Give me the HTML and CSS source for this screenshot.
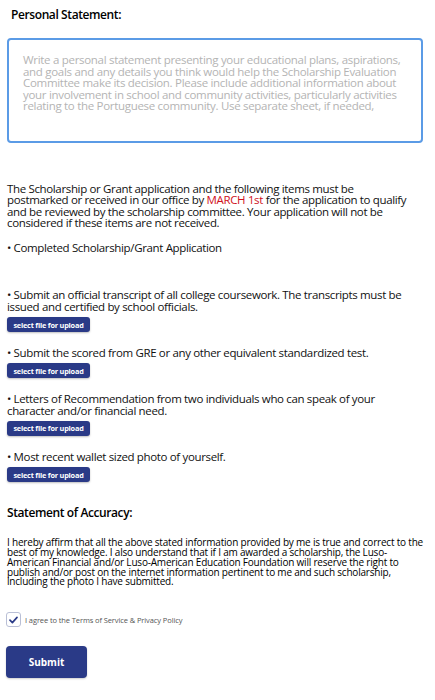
FILE: index.html
```html
<!DOCTYPE html>
<html lang="en">
<head>
<meta charset="utf-8">
<title>Scholarship Application</title>
<link rel="stylesheet" href="styles.css">
</head>
<body>
<main class="page">
  <h2 class="section-title first">Personal Statement:</h2>
  <textarea class="statement" placeholder="Write a personal statement presenting your educational plans, aspirations, and goals and any details you think would help the Scholarship Evaluation Committee make its decision. Please include additional information about your involvement in school and community activities, particularly activities relating to the Portuguese community. Use separate sheet, if needed,"></textarea>

  <p class="intro">The Scholarship or Grant application and the following items must be<br>postmarked or received in our office by <span class="deadline">MARCH 1st</span> for the application to qualify and be reviewed by the scholarship committee. Your application will not be considered if these items are not received.</p>

  <ul class="items">
    <li class="item item-plain">• Completed Scholarship/Grant Application</li>
    <li class="item">
      <p class="item-text">• Submit an official transcript of all college coursework. The transcripts must be issued and certified by school officials.</p>
      <button class="upload" type="button">select file for upload</button>
    </li>
    <li class="item">
      <p class="item-text">• Submit the scored from GRE or any other equivalent standardized test.</p>
      <button class="upload" type="button">select file for upload</button>
    </li>
    <li class="item">
      <p class="item-text">• Letters of Recommendation from two individuals who can speak of your character and/or financial need.</p>
      <button class="upload" type="button">select file for upload</button>
    </li>
    <li class="item">
      <p class="item-text">• Most recent wallet sized photo of yourself.</p>
      <button class="upload" type="button">select file for upload</button>
    </li>
  </ul>

  <h2 class="section-title">Statement of Accuracy:</h2>
  <p class="accuracy">I hereby affirm that all the above stated information provided by me is true and correct to the best of my knowledge. I also understand that if I am awarded a scholarship, the Luso-American Financial and/or Luso-American Education Foundation will reserve the right to publish and/or post on the internet information pertinent to me and such scholarship, including the photo I have submitted.</p>

  <label class="agree">
    <span class="checkbox">
      <svg viewBox="0 0 14 14" width="14" height="14" aria-hidden="true"><path d="M3.2 7.2 L5.8 9.8 L10.8 4.2" fill="none" stroke="#2a3a87" stroke-width="1.8" stroke-linecap="round" stroke-linejoin="round"/></svg>
    </span>
    <span class="agree-text">I agree to the Terms of Service &amp; Privacy Policy</span>
  </label>

  <button class="submit" type="button">Submit</button>
</main>
</body>
</html>
```
FILE: styles.css
```css
* { box-sizing: border-box; }
html, body { margin: 0; padding: 0; background: #fff; }
body {
  font-family: "Open Sans", "Noto Sans", sans-serif;
  color: #111;
}
.page {
  padding: 8px 12px 20px 7px;
  display: flex;
  flex-direction: column;
  align-items: flex-start;
}
.section-title {
  margin: 0;
  font-size: 12px;
  font-weight: 600;
  letter-spacing: -0.4px;
  line-height: 14px;
  color: #000;
}
.section-title.first { margin-left: 4px; }
.statement {
  display: block;
  margin-top: 16px;
  width: 416px;
  height: 105px;
  border: 2px solid #5b9be6;
  border-radius: 4px;
  padding: 14px 14px;
  font-family: inherit;
  font-size: 11.5px;
  letter-spacing: -0.3px;
  line-height: 11.6px;
  resize: none;
  outline: none;
  background: #fff;
}
.statement::placeholder { color: #b4b4b4; }
.intro {
  margin: 40px 0 0;
  font-size: 11.5px;
  letter-spacing: -0.35px;
  line-height: 11.3px;
  color: #111;
}
.deadline { color: #d0101c; }
.items {
  list-style: none;
  margin: 14px 0 0;
  padding: 0;
  width: 100%;
}
.item {
  font-size: 11.5px;
  letter-spacing: -0.35px;
  line-height: 11.3px;
  margin-bottom: 15px;
}
.item-plain { margin-bottom: 36px; }
.item-text { margin: 0 0 5px; }
.upload {
  display: block;
  height: 15px;
  width: 83px;
  padding: 0;
  border: none;
  border-radius: 3px;
  background: #2a3a87;
  color: #fff;
  font-family: inherit;
  font-weight: 700;
  font-size: 7.3px;
  letter-spacing: -0.2px;
  box-shadow: 0 1px 2px rgba(0,0,0,0.25);
}
.items .item:last-child { margin-bottom: 24px; }
.accuracy {
  margin: 18px 0 0;
  font-size: 10px;
  letter-spacing: -0.2px;
  line-height: 9.8px;
  color: #000;
}
.agree {
  display: flex;
  align-items: center;
  gap: 4px;
  margin: 25px 0 0 -1px;
}
.checkbox {
  width: 15px;
  height: 15px;
  border: 1px solid #b9bfd6;
  border-radius: 3px;
  display: flex;
  align-items: center;
  justify-content: center;
}
.agree-text {
  font-size: 7.5px;
  letter-spacing: -0.1px;
  color: #555;
}
.submit {
  margin: 19px 0 0 -1px;
  width: 81px;
  height: 32px;
  border: none;
  border-radius: 4px;
  background: #2a3a87;
  color: #fff;
  font-family: inherit;
  font-weight: 700;
  font-size: 10px;
  box-shadow: 0 1px 2px rgba(0,0,0,0.2);
}
```
